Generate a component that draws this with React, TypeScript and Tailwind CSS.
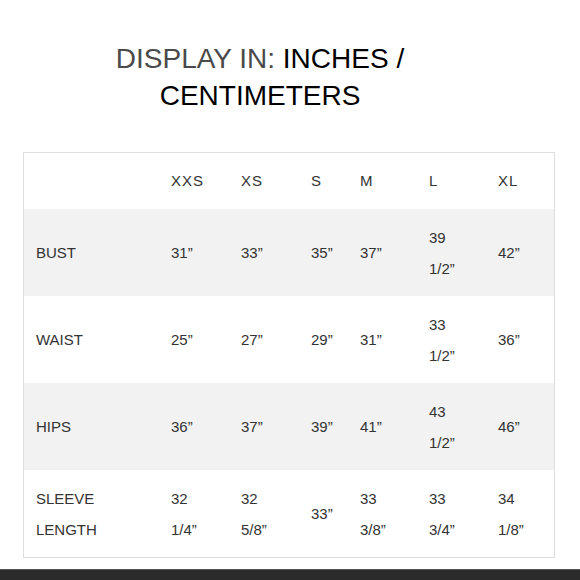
const sizes = ["XXS", "XS", "S", "M", "L", "XL"];

const rows: { label: string[]; values: string[][]; shaded: boolean }[] = [
  {
    label: ["BUST"],
    values: [["31”"], ["33”"], ["35”"], ["37”"], ["39", "1/2”"], ["42”"]],
    shaded: true,
  },
  {
    label: ["WAIST"],
    values: [["25”"], ["27”"], ["29”"], ["31”"], ["33", "1/2”"], ["36”"]],
    shaded: false,
  },
  {
    label: ["HIPS"],
    values: [["36”"], ["37”"], ["39”"], ["41”"], ["43", "1/2”"], ["46”"]],
    shaded: true,
  },
  {
    label: ["SLEEVE", "LENGTH"],
    values: [
      ["32", "1/4”"],
      ["32", "5/8”"],
      ["33”"],
      ["33", "3/8”"],
      ["33", "3/4”"],
      ["34", "1/8”"],
    ],
    shaded: false,
  },
];

function Cell({ lines }: { lines: string[] }) {
  return (
    <div className="flex flex-col justify-center pl-3 leading-[31px]">
      {lines.map((l) => (
        <span key={l}>{l}</span>
      ))}
    </div>
  );
}

export default function App() {
  return (
    <div className="relative h-[580px] w-[580px] overflow-hidden bg-white font-['Liberation_Sans',Arial,sans-serif]">
      <div className="ml-[50px] w-[420px] pt-10 text-center text-[28px] leading-[37px] text-black">
        <div>
          <span className="text-[#4a4a4a]">DISPLAY IN: </span>INCHES /
        </div>
        <div>CENTIMETERS</div>
      </div>

      <div className="ml-[23px] mt-[38px] w-[532px] border border-[#dedede] text-[15px] text-[#333]">
        <div className="grid h-[56px] grid-cols-[135px_70px_70px_49px_69px_69px_68px] tracking-[1px]">
          <div />
          {sizes.map((s) => (
            <div key={s} className="flex items-center pl-3">
              {s}
            </div>
          ))}
        </div>
        {rows.map((r) => (
          <div
            key={r.label[0]}
            className={`grid h-[87px] grid-cols-[135px_70px_70px_49px_69px_69px_68px] ${
              r.shaded ? "bg-[#f2f2f2]" : "bg-white"
            }`}
          >
            <Cell lines={r.label} />
            {r.values.map((v, i) => (
              <Cell key={i} lines={v} />
            ))}
          </div>
        ))}
      </div>

      <div className="absolute bottom-0 left-0 h-[11px] w-full border-t border-[#555] bg-[#2b2b2b]" />
    </div>
  );
}
